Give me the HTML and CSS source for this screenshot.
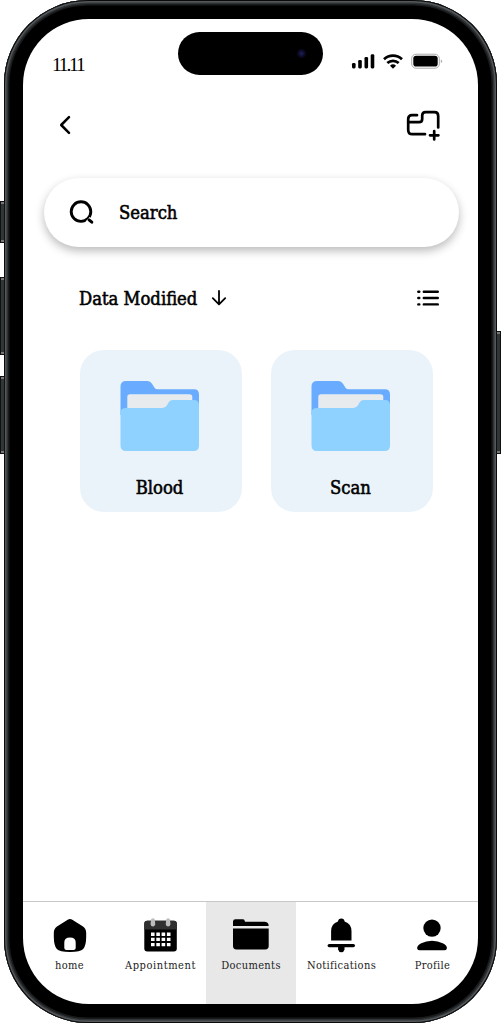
FILE: index.html
```html
<!DOCTYPE html>
<html lang="en">
<head>
<meta charset="utf-8">
<title>Documents</title>
<link rel="stylesheet" href="styles.css">
</head>
<body>
<div class="phone">
  <span class="key key-action"></span>
  <span class="key key-up"></span>
  <span class="key key-down"></span>
  <span class="key key-power"></span>
  <div class="rim">
  <div class="screen">
    <div class="island"><span class="camera"></span></div>
    <header class="status">
      <span class="time">11.11</span>
      <svg class="signals" width="92" height="18" viewBox="0 0 92 18">
        <rect x="1" y="10" width="3.6" height="5.4" rx="1.3"/>
        <rect x="7.2" y="7" width="3.6" height="8.4" rx="1.3"/>
        <rect x="13.5" y="4" width="3.6" height="11.4" rx="1.3"/>
        <rect x="19.7" y="1.2" width="3.6" height="14.2" rx="1.3"/>
        <g fill="none" stroke="#000" stroke-width="2.7">
          <path d="M33 6.2a13.3 13.3 0 0 1 18 0"/>
          <path d="M36.3 10.1a8.5 8.5 0 0 1 11.4 0"/>
        </g>
        <path d="M39 12.7a4.5 4.5 0 0 1 6 0L42 15.7z"/>
        <rect x="60.7" y="1.2" width="27.6" height="14" rx="4.3" fill="none" stroke="#aaa"/>
        <rect x="62.3" y="2.8" width="24.4" height="10.8" rx="2.8"/>
        <path d="M89.8 6.2q2.5 2 0 4z" fill="#aaa"/>
      </svg>
    </header>
    <div class="toolbar">
      <svg width="12" height="20" viewBox="0 0 12 20"><path class="line" stroke-width="2.5" d="M10 2.2 2.2 10 10 17.8"/></svg>
      <svg width="36" height="32" viewBox="0 0 36 32"><g class="line" stroke-width="2.7"><path d="M12 6.2H7Q3.2 6.2 3.2 10V21Q3.2 25.2 7.4 25.2H20"/><path d="M3.2 13.2H14Q17.2 13.2 17.2 10V6.5Q17.2 3.2 20.5 3.2H29.5Q33.2 3.2 33.2 7V18.5"/><path d="M29.2 22V30.5M25 26.3H33.4"/></g></svg>
    </div>
    <div class="search">
      <svg width="28" height="28" viewBox="0 0 28 28"><circle class="line" cx="14" cy="12.6" r="9.8" stroke-width="2.9"/><path d="M20.6 20.3 23.8 23.3" stroke="#fff" stroke-width="6"/><path class="line" d="M22 20.8 24.8 23.2" stroke-width="3"/></svg>
      <span class="title">Search</span>
    </div>
    <div class="sort">
      <span class="title title-sort">Data Modified</span>
      <svg class="arrow" width="16" height="18" viewBox="0 0 16 18"><path class="line" stroke-width="1.8" d="M8 2V15M1.8 9.2 8 15.4 14.2 9.2"/></svg>
      <svg class="list" width="24" height="18" viewBox="0 0 24 18"><path class="line" stroke-width="2.4" d="M2.3 2.7H3.3M2.3 9H3.3M2.3 15.4H3.3M7.8 2.7H21.8M7.8 9H21.8M7.8 15.4H21.8"/></svg>
    </div>
    <main class="cards">
      <article class="card">
        <svg width="80" height="72" viewBox="0 0 80 72"><path fill="#69acff" d="M.5 35V6.5Q.5 1 6 1H27.5Q30.5 1 32 3.8L34.5 7.7Q35.5 9.3 38 9.3H74Q79 9.3 79 14.5V35z"/><path fill="#e7ebee" d="M7.3 33V17Q7.3 14.3 10 14.3H69.5Q72.3 14.3 72.3 17V33z"/><path fill="#8fd1ff" d="M.5 65V33Q.5 28 6 28H42.5Q45.5 28 47 25.3L48.7 22.3Q50 20 53 20H74Q79 20 79 25V65.5Q79 71 73.5 71H6Q.5 71 .5 65z"/></svg>
        <span class="title">Blood</span>
      </article>
      <article class="card">
        <svg width="80" height="72" viewBox="0 0 80 72"><path fill="#69acff" d="M.5 35V6.5Q.5 1 6 1H27.5Q30.5 1 32 3.8L34.5 7.7Q35.5 9.3 38 9.3H74Q79 9.3 79 14.5V35z"/><path fill="#e7ebee" d="M7.3 33V17Q7.3 14.3 10 14.3H69.5Q72.3 14.3 72.3 17V33z"/><path fill="#8fd1ff" d="M.5 65V33Q.5 28 6 28H42.5Q45.5 28 47 25.3L48.7 22.3Q50 20 53 20H74Q79 20 79 25V65.5Q79 71 73.5 71H6Q.5 71 .5 65z"/></svg>
        <span class="title">Scan</span>
      </article>
    </main>
    <nav class="tabs">
      <a class="tab">
        <svg width="38" height="38" viewBox="0 0 38 38"><path fill-rule="evenodd" d="M16.7 2.8Q19 1 21.3 2.8L32 9.5Q35.2 11.8 35.2 16V19.5Q35.2 28.5 32.2 32 29.5 35 19 35T5.8 32Q2.8 28.5 2.8 19.5V16Q2.8 11.8 6 9.5zM13.3 31Q13.3 32.9 15.5 32.9H22.5Q24.7 32.9 24.7 31V25.5Q24.7 20.5 19 20.5T13.3 25.5z"/></svg>
        <span class="label">home</span>
      </a>
      <a class="tab">
        <svg width="38" height="38" viewBox="0 0 38 38"><rect x="2.3" y="3.8" width="32.5" height="30.6" rx="3"/><path d="M2.3 12.5V6.8Q2.3 3.8 5.3 3.8H31.8Q34.8 3.8 34.8 6.8V12.5z" fill="#303030"/><g fill="#bcbcbc"><path d="M9.1 2.3Q11 .3 12.7 2.3L13.3 7.3Q12.8 9.5 10.9 9.5T8.5 7.3zM24.3 2.3Q26.1 .3 27.9 2.3L28.5 7.3Q28 9.5 26.1 9.5T23.7 7.3z"/></g><path d="M9 17.2H29M9 22.4H29M9 27.6H29" stroke="#fff" stroke-width="3.4" stroke-dasharray="3.6 1.7"/></svg>
        <span class="label">Appointment</span>
      </a>
      <a class="tab active">
        <svg width="38" height="38" viewBox="0 0 38 38"><path d="M1 9V4.5Q1 2.3 3.5 2.3H11Q12.5 2.3 13 4.7H33Q36.7 5 36.7 9zM1 11.5H36.7V29Q36.7 32.4 33.2 32.4H4.4Q1 32.4 1 29z"/></svg>
        <span class="label">Documents</span>
      </a>
      <a class="tab">
        <svg width="38" height="38" viewBox="0 0 38 38"><path d="M8.1 23.5V14.3Q8.1 6.8 15 4.6 15.3 1.5 18.3 1.5T21.6 4.6Q28.5 6.8 28.5 14.3V23.5z"/><rect x="4.6" y="27" width="27.4" height="3.2" rx="1.6"/><path d="M15.1 29H21.5V32.4Q20.8 35.2 18.3 35.2T15.1 32.4z"/></svg>
        <span class="label">Notifications</span>
      </a>
      <a class="tab">
        <svg width="38" height="38" viewBox="0 0 38 38"><circle cx="18" cy="11.1" r="8.7"/><path d="M3.3 32Q2.3 28.8 7.3 26.2 12.1 23.7 18 23.7T28.7 26.2Q33.9 28.8 32.7 32 32.2 33.3 30.4 33.3H5.8Q3.8 33.3 3.3 32z"/></svg>
        <span class="label">Profile</span>
      </a>
    </nav>
  </div>
  </div>
</div>
</body>
</html>
```
FILE: styles.css
```css
* { box-sizing: border-box; }
body { margin: 0; background: #fff; color: #000; font-family: "DejaVu Serif Condensed", "DejaVu Serif", serif; font-stretch: condensed; }
svg { display: block; flex: none; }
.line { fill: none; stroke: #000; stroke-linecap: round; stroke-linejoin: round; }
.phone { position: relative; width: 501px; height: 1024px; padding: 0 4px; }
.rim {
  height: 1023px; padding: 19px 19px 18px; border-radius: 84px; background: #000;
  box-shadow: inset 0 0 0 1px #090a0a, inset 0 0 0 2.5px #55585a, inset 0 0 0 4px #303335, inset 0 0 0 5.5px #191a1b;
}
.screen { position: relative; display: flex; flex-direction: column; height: 985px; overflow: hidden; border-radius: 66px; background: #fff; }
.key { position: absolute; width: 5px; left: 0; border: 1px solid #111; background: #303638; box-shadow: inset 0 2px #777, inset 0 -2px #777; }
.key-action { top: 201px; height: 42px; }
.key-up { top: 277px; height: 78px; }
.key-down { top: 376px; height: 78px; }
.key-power { top: 331px; height: 123px; left: auto; right: 0; }
.island { position: absolute; top: 13px; left: 155px; width: 145px; height: 43px; border-radius: 22px; background: #000; }
.camera { position: absolute; left: 119px; top: 17px; width: 9px; height: 9px; border-radius: 50%; background: radial-gradient(circle, #1b1b48 0 15%, #0b0b2b 45%, #05050d 80%); }
.status { display: flex; justify-content: space-between; height: 77px; padding: 34px 35px 0 29px; }
.time { font-family: "Liberation Serif", serif; font-size: 19.5px; line-height: 24px; letter-spacing: -2.2px; }
.toolbar { display: flex; align-items: center; justify-content: space-between; height: 57px; padding: 0 37px 0 36px; }
.search { display: flex; align-items: center; gap: 24px; height: 69px; margin: 25px 19px 0 21px; padding-left: 23px; border-radius: 35px; box-shadow: 0 4px 10px rgba(0,0,0,.27); }
.title { padding-top: 1px; font-size: 18.3px; line-height: 24px; white-space: nowrap; -webkit-text-stroke: .55px #000; }
.title-sort { margin-left: -1px; }
.sort { display: flex; align-items: center; height: 30px; margin: 36px 38px 0 57px; }
.arrow { margin-left: 14px; }
.list { margin-left: auto; }
.cards { display: flex; gap: 29px; margin: 37px 0 0 57px; }
.card { display: flex; flex-direction: column; align-items: center; width: 162px; height: 162px; padding: 30px 3px 0 0; gap: 23px; border-radius: 24px; background: #ebf3fa; }
.tabs { display: grid; grid-template-columns: 92px 91px 90px 91px 91px; height: 103px; margin-top: auto; border-top: 1px solid #c8c8c8; }
.tab:first-child { padding-left: 1px; }
.tab { display: flex; flex-direction: column; align-items: center; padding-top: 15px; gap: 3px; }
.active { background: #e8e8e8; }
.label { font-size: 11px; line-height: 16px; letter-spacing: .35px; color: #222; white-space: nowrap; }
.tab:nth-child(2) .label { letter-spacing: .55px; }
```
